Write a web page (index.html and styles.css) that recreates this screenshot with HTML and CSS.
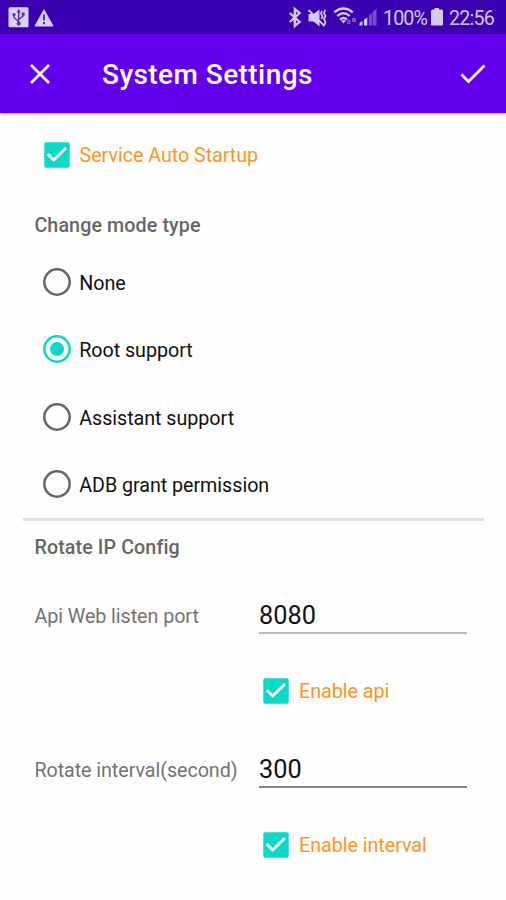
FILE: index.html
```html
<!DOCTYPE html>
<html lang="en">
<head>
<meta charset="utf-8">
<title>System Settings</title>
<link rel="stylesheet" href="styles.css">
</head>
<body>
<div class="status">
  <svg class="notices" viewBox="0 0 60 34">
    <rect x="8.5" y="7.3" width="20" height="20" rx="1.5" fill="#dccffa"/>
    <g fill="none" stroke="#5030b4" stroke-width="1.4"><path d="M18.7 10v14M18.7 21.5l-4.7-4v-3M18.7 19.5l4.5-3.500v-2.500"/></g>
    <g fill="#5030b4"><path d="M16.500 12.500l2.200-3.500 2.200 3.500z"/><circle cx="18.700" cy="23.600" r="2"/><circle cx="14" cy="14.500" r="1.600"/><path d="M21.700 12.500h3v3h-3z"/></g>
    <path d="M44 9.800L53 26H35z" fill="#dccffa" stroke="#dccffa" stroke-linejoin="round"/>
    <path d="M44 14.500v6M44 22v2.300" stroke="#5030b4" stroke-width="2"/>
  </svg>
  <div class="system">
    <svg class="signals" viewBox="284 0 96 34">
      <path d="M289.800 13l9.800 9-4.800 4V9l4.800 4-9.800 9" fill="none" stroke="#d4c8f5" stroke-width="2.300"/>
      <path d="M308.500 14h5l6-4.500v17l-6-5h-5z" fill="#d4c8f5"/>
      <path d="M308.500 10l16 16" stroke="#d4c8f5" stroke-width="1.800"/>
      <path d="M322 11l-1 2.500 1.500 3-1 2.500M325.200 10l-1.200 3 1.500 3-1.500 3 1.500 3-1 3" fill="none" stroke="#d4c8f5" stroke-width="1.700"/>
      <g fill="none" stroke="#d4c8f5" stroke-width="2.300"><path d="M334.300 12.300q9.200-7.500 18.400 0M337.300 16q6.200-5.500 12.400 0M340 19.500q3.500-3 7 0"/></g>
      <path d="M340.800 20.300h5.400l-2.700 3.200z" fill="#d4c8f5"/>
      <path d="M347 20h3.500v4H347zM352 18h4v4h-4z" fill="#7550cb"/>
      <path d="M359.500 25.500v-2.500l3-2v4.500zM364 25.500v-6l3.300-2v8z" fill="#d4c8f5"/>
      <path d="M368.800 25.500v-10l3.200-2.500v12.500zM372.600 25.500V12l3.900-3.500v17z" fill="#7550cb"/>
    </svg>
    <span class="percent">100%</span>
    <svg class="battery" viewBox="0 0 14 20"><path d="M1 4q0-1.500 1.500-1.500H4.500V1h4.500v1.500h2.500Q13 2.500 13 4v13.500q0 1-1 1H2q-1 0-1-1z" fill="#d4c8f5"/></svg>
    <span class="clock">22:56</span>
  </div>
</div>
<header class="bar">
  <svg class="close" viewBox="0 0 20 20"><path d="M1 1l18 18M19 1L1 19" stroke="#fff" stroke-width="2.700"/></svg>
  <h1>System Settings</h1>
  <svg class="done" viewBox="0 0 26 20"><path d="M1.500 10.500l7 7L24.500 1.500" fill="none" stroke="#fff" stroke-width="2.700"/></svg>
</header>
<main>
  <div class="option startup"><svg class="box" viewBox="0 0 26 26"><rect x=".3" y=".3" width="25.400" height="25.400" rx="2"/><path d="M3.700 12l6 6L22 6"/></svg><span>Service Auto Startup</span></div>
  <h2 class="mode-title">Change mode type</h2>
  <div class="modes">
    <div class="option mode"><svg class="radio" viewBox="0 0 28 28"><circle cx="14" cy="14" r="12.700"/></svg><span>None</span></div>
    <div class="option mode"><svg class="radio on" viewBox="0 0 28 28"><circle cx="14" cy="14" r="12.700"/><circle class="dot" cx="14" cy="14" r="7"/></svg><span>Root support</span></div>
    <div class="option mode"><svg class="radio" viewBox="0 0 28 28"><circle cx="14" cy="14" r="12.700"/></svg><span>Assistant support</span></div>
    <div class="option mode"><svg class="radio" viewBox="0 0 28 28"><circle cx="14" cy="14" r="12.700"/></svg><span>ADB grant permission</span></div>
  </div>
  <div class="divider"></div>
  <h2 class="config-title">Rotate IP Config</h2>
  <div class="field port"><label>Api Web listen port</label><div class="value light">8080</div></div>
  <div class="option nested"><svg class="box" viewBox="0 0 26 26"><rect x=".3" y=".3" width="25.400" height="25.400" rx="2"/><path d="M3.700 12l6 6L22 6"/></svg><span>Enable api</span></div>
  <div class="field interval"><label>Rotate interval(second)</label><div class="value">300</div></div>
  <div class="option nested"><svg class="box" viewBox="0 0 26 26"><rect x=".3" y=".3" width="25.400" height="25.400" rx="2"/><path d="M3.700 12l6 6L22 6"/></svg><span>Enable interval</span></div>
</main>
</body>
</html>
```
FILE: styles.css
```css
* { box-sizing: border-box; }
body { margin: 0; height: 900px; overflow: hidden; background: #fefefe; font-family: Roboto, sans-serif; font-size: 19.7px; line-height: 24px; color: #111; }
svg { display: block; flex: none; }
h1, h2 { margin: 0; }
.status { height: 34px; background: #3a00b1; display: flex; justify-content: space-between; color: #d4c8f5; }
.notices { width: 60px; height: 34px; }
.system { display: flex; align-items: center; width: 222px; }
.signals { width: 96px; height: 34px; }
.percent { width: 50px; padding: 3px 0 0 3px; letter-spacing: -.9px; }
.battery { width: 14px; height: 20px; margin-right: 5px; }
.clock { padding-top: 3px; letter-spacing: -.8px; }
.bar { height: 79px; background: #6200ee; display: flex; align-items: center; padding: 0 20px 0 30px; color: #fff; box-shadow: 0 1px 3px rgba(0,0,0,.35); }
.close { width: 20px; height: 20px; }
h1 { flex: 1; margin-left: 52px; padding-top: 2px; font-size: 28px; font-weight: 500; line-height: 36px; letter-spacing: .43px; }
.done { width: 26px; height: 20px; }
main { padding: 0 22px 0 23px; }
.option { display: flex; align-items: center; gap: 10px; color: #ff9420; }
.option span { padding-top: 2px; letter-spacing: -.03px; }
.startup { height: 83px; padding-left: 21px; gap: 9.5px; }
.box { width: 26px; height: 26px; }
.box rect { fill: #09d9c7; }
.box path { fill: none; stroke: #fff; stroke-width: 2.8; }
h2 { font-size: 19.7px; font-weight: 500; line-height: 24px; letter-spacing: .1px; color: #666; padding-left: 11.4px; }
.mode-title { margin-top: 18px; }
.modes { margin-top: 10px; }
.mode { height: 67.5px; padding-left: 19.7px; gap: 8.5px; color: #111; }
.mode span { padding-top: 3.5px; }
.radio { width: 28px; height: 28px; fill: none; stroke: #666; stroke-width: 2.5; }
.on { stroke: #09d9c7; }
.dot { fill: #09d9c7; stroke: none; }
.divider { height: 3px; background: #e0e0e0; }
.config-title { margin-top: 15px; }
.field { display: flex; align-items: center; height: 54px; padding: 0 17px 0 11.4px; color: #737373; }
.port { margin-top: 30px; }
.interval { margin-top: 17px; }
label { width: 224.6px; flex: none; letter-spacing: -.05px; }
.value { flex: 1; height: 37px; margin-bottom: 4px; border-bottom: 2px solid #858585; font-size: 25.3px; line-height: 37px; color: #111; }
.light { border-color: #bbb; }
.nested { height: 83px; padding: 10px 0 0 240px; }
.nested span { padding-top: 3px; }
```
